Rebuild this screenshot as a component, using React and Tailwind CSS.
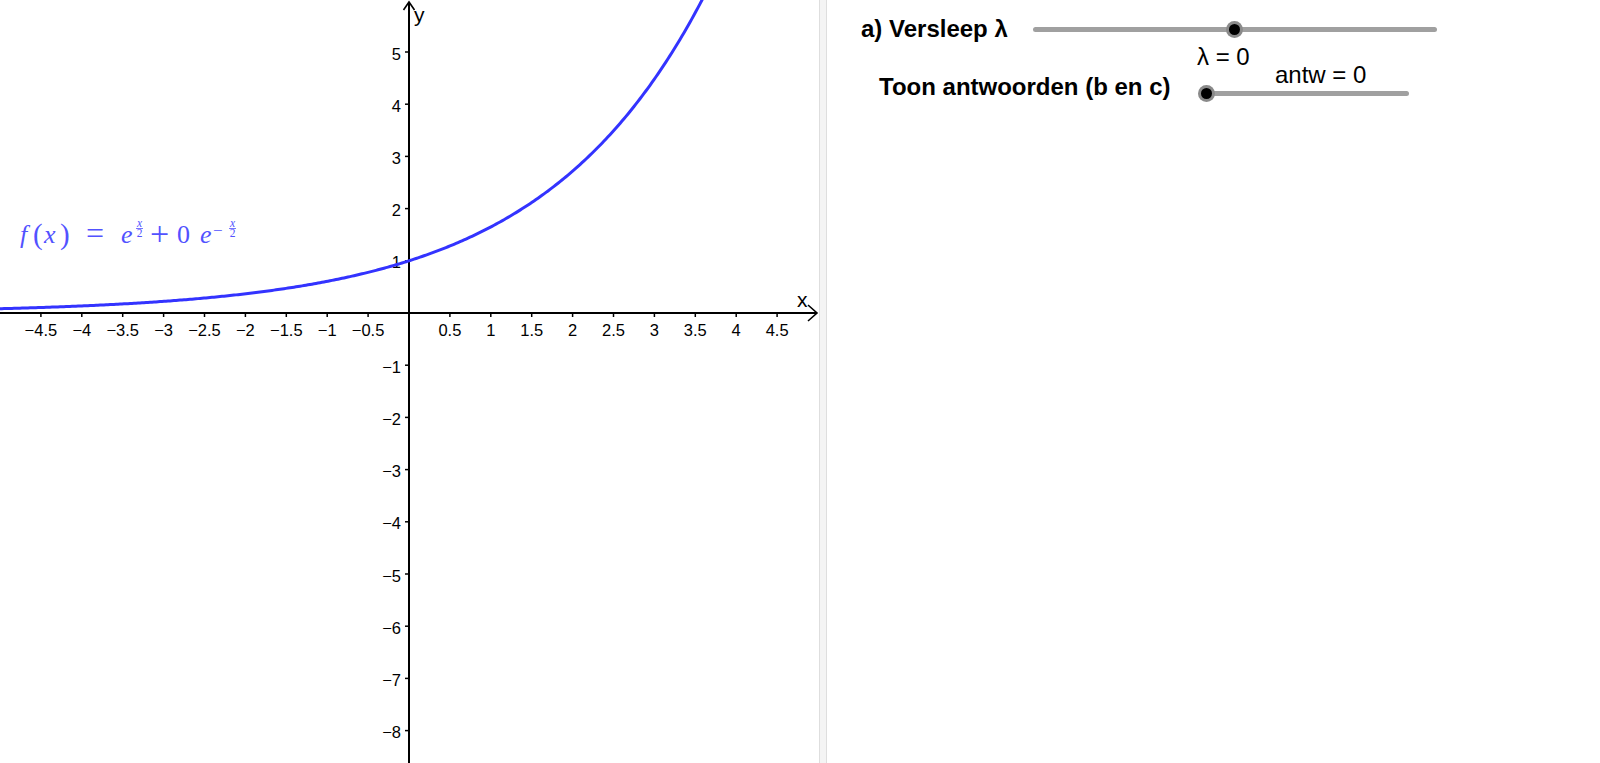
import React from "react";

const OX = 409;
const OY = 313;
const SX = 81.8;
const SY = 52.2;

const xTicks = [-4.5, -4, -3.5, -3, -2.5, -2, -1.5, -1, -0.5, 0.5, 1, 1.5, 2, 2.5, 3, 3.5, 4, 4.5];
const yTicks = [5, 4, 3, 2, 1, -1, -2, -3, -4, -5, -6, -7, -8];

const fmt = (v) => (v < 0 ? "\u2212" + String(-v) : String(v));

function curvePath() {
  const pts = [];
  for (let px = 0; px <= 720; px += 2) {
    const xv = (px - OX) / SX;
    const py = OY - Math.exp(xv / 2) * SY;
    pts.push(`${px},${py.toFixed(2)}`);
    if (py < -5) break;
  }
  return "M" + pts.join(" L");
}

function Graph() {
  return (
    <svg width="819" height="763" className="block">
      {/* axes */}
      <line x1="0" y1={OY} x2="817" y2={OY} stroke="#000" strokeWidth="2" />
      <polyline points="808,305 817,313 808,321" fill="none" stroke="#000" strokeWidth="1.6" />
      <line x1={OX} y1="763" x2={OX} y2="2" stroke="#000" strokeWidth="2" />
      <polyline points="403.5,10 409,2 414.5,10" fill="none" stroke="#000" strokeWidth="1.6" />

      {xTicks.map((t) => {
        const x = OX + t * SX;
        return (
          <g key={"x" + t}>
            <line x1={x} y1={OY} x2={x} y2={OY + 4} stroke="#000" strokeWidth="1.5" />
            <text x={x} y="336" textAnchor="middle" fontSize="16.5" fontFamily="'Liberation Sans', Arial, sans-serif" fill="#000">
              {fmt(t)}
            </text>
          </g>
        );
      })}
      {yTicks.map((t) => {
        const y = OY - t * SY;
        return (
          <g key={"y" + t}>
            <line x1={OX - 4} y1={y} x2={OX} y2={y} stroke="#000" strokeWidth="1.5" />
            <text x="401" y={y + 7.5} textAnchor="end" fontSize="16.5" fontFamily="'Liberation Sans', Arial, sans-serif" fill="#000">
              {fmt(t)}
            </text>
          </g>
        );
      })}
      <text x="797" y="307" fontSize="21" fontFamily="'Liberation Sans', Arial, sans-serif">x</text>
      <text x="414" y="22" fontSize="21" fontFamily="'Liberation Sans', Arial, sans-serif">y</text>

      <path d={curvePath()} fill="none" stroke="#3333ff" strokeWidth="3" />

      {/* formula */}
      <g fill="#5252ff" fontFamily="'Liberation Serif', 'DejaVu Serif', serif" fontSize="26">
        <text x="20" y="243" fontStyle="italic">f</text>
        <text x="33" y="244" fontSize="29">(</text>
        <text x="44" y="243" fontStyle="italic">x</text>
        <text x="60" y="244" fontSize="29">)</text>
        <text x="86" y="244" fontSize="32">=</text>
        <text x="121" y="243" fontStyle="italic">e</text>
        <text x="139.5" y="226.5" fontSize="11.5" fontStyle="italic" textAnchor="middle">x</text>
        <line x1="136" y1="228.5" x2="143" y2="228.5" stroke="#5252ff" strokeWidth="0.8" />
        <text x="139.5" y="236.5" fontSize="11.5" textAnchor="middle">2</text>
        <text x="150" y="245" fontSize="34">+</text>
        <text x="177" y="243">0</text>
        <text x="200" y="243" fontStyle="italic">e</text>
        <text x="213" y="236" fontSize="17">{"\u2212"}</text>
        <text x="232.5" y="226.5" fontSize="11.5" fontStyle="italic" textAnchor="middle">x</text>
        <line x1="229" y1="228.5" x2="236" y2="228.5" stroke="#5252ff" strokeWidth="0.8" />
        <text x="232.5" y="236.5" fontSize="11.5" textAnchor="middle">2</text>
      </g>
    </svg>
  );
}

function Knob({ className }) {
  return (
    <div className={"absolute flex h-[17px] w-[17px] items-center justify-center rounded-full bg-[#8a8a8a] " + className}>
      <div className="h-[11px] w-[11px] rounded-full bg-black" />
    </div>
  );
}

export default function App() {
  return (
    <div className="flex h-[763px] w-[1600px] overflow-hidden bg-white font-['Liberation_Sans',Arial,sans-serif] text-black">
      <div className="relative h-full w-[819px]">
        <Graph />
      </div>
      <div className="h-full w-[8px] border-x border-[#dedede] bg-[#f4f4f4]" />
      <div className="relative h-full flex-1 text-[24px] leading-[24px] whitespace-nowrap">
        <div className="absolute left-[34px] top-[17px] font-bold">a) Versleep λ</div>
        <div className="absolute left-[206px] top-[27px] h-[5px] w-[404px] rounded-full bg-[#a0a0a0]" />
        <Knob className="left-[399px] top-[21px]" />
        <div className="absolute left-[370px] top-[45px]">λ = 0</div>

        <div className="absolute left-[52px] top-[75px] font-bold">Toon antwoorden (b en c)</div>
        <div className="absolute left-[448px] top-[63px]">antw = 0</div>
        <div className="absolute left-[380px] top-[91px] h-[5px] w-[202px] rounded-full bg-[#a0a0a0]" />
        <Knob className="left-[371px] top-[85px]" />
      </div>
    </div>
  );
}
